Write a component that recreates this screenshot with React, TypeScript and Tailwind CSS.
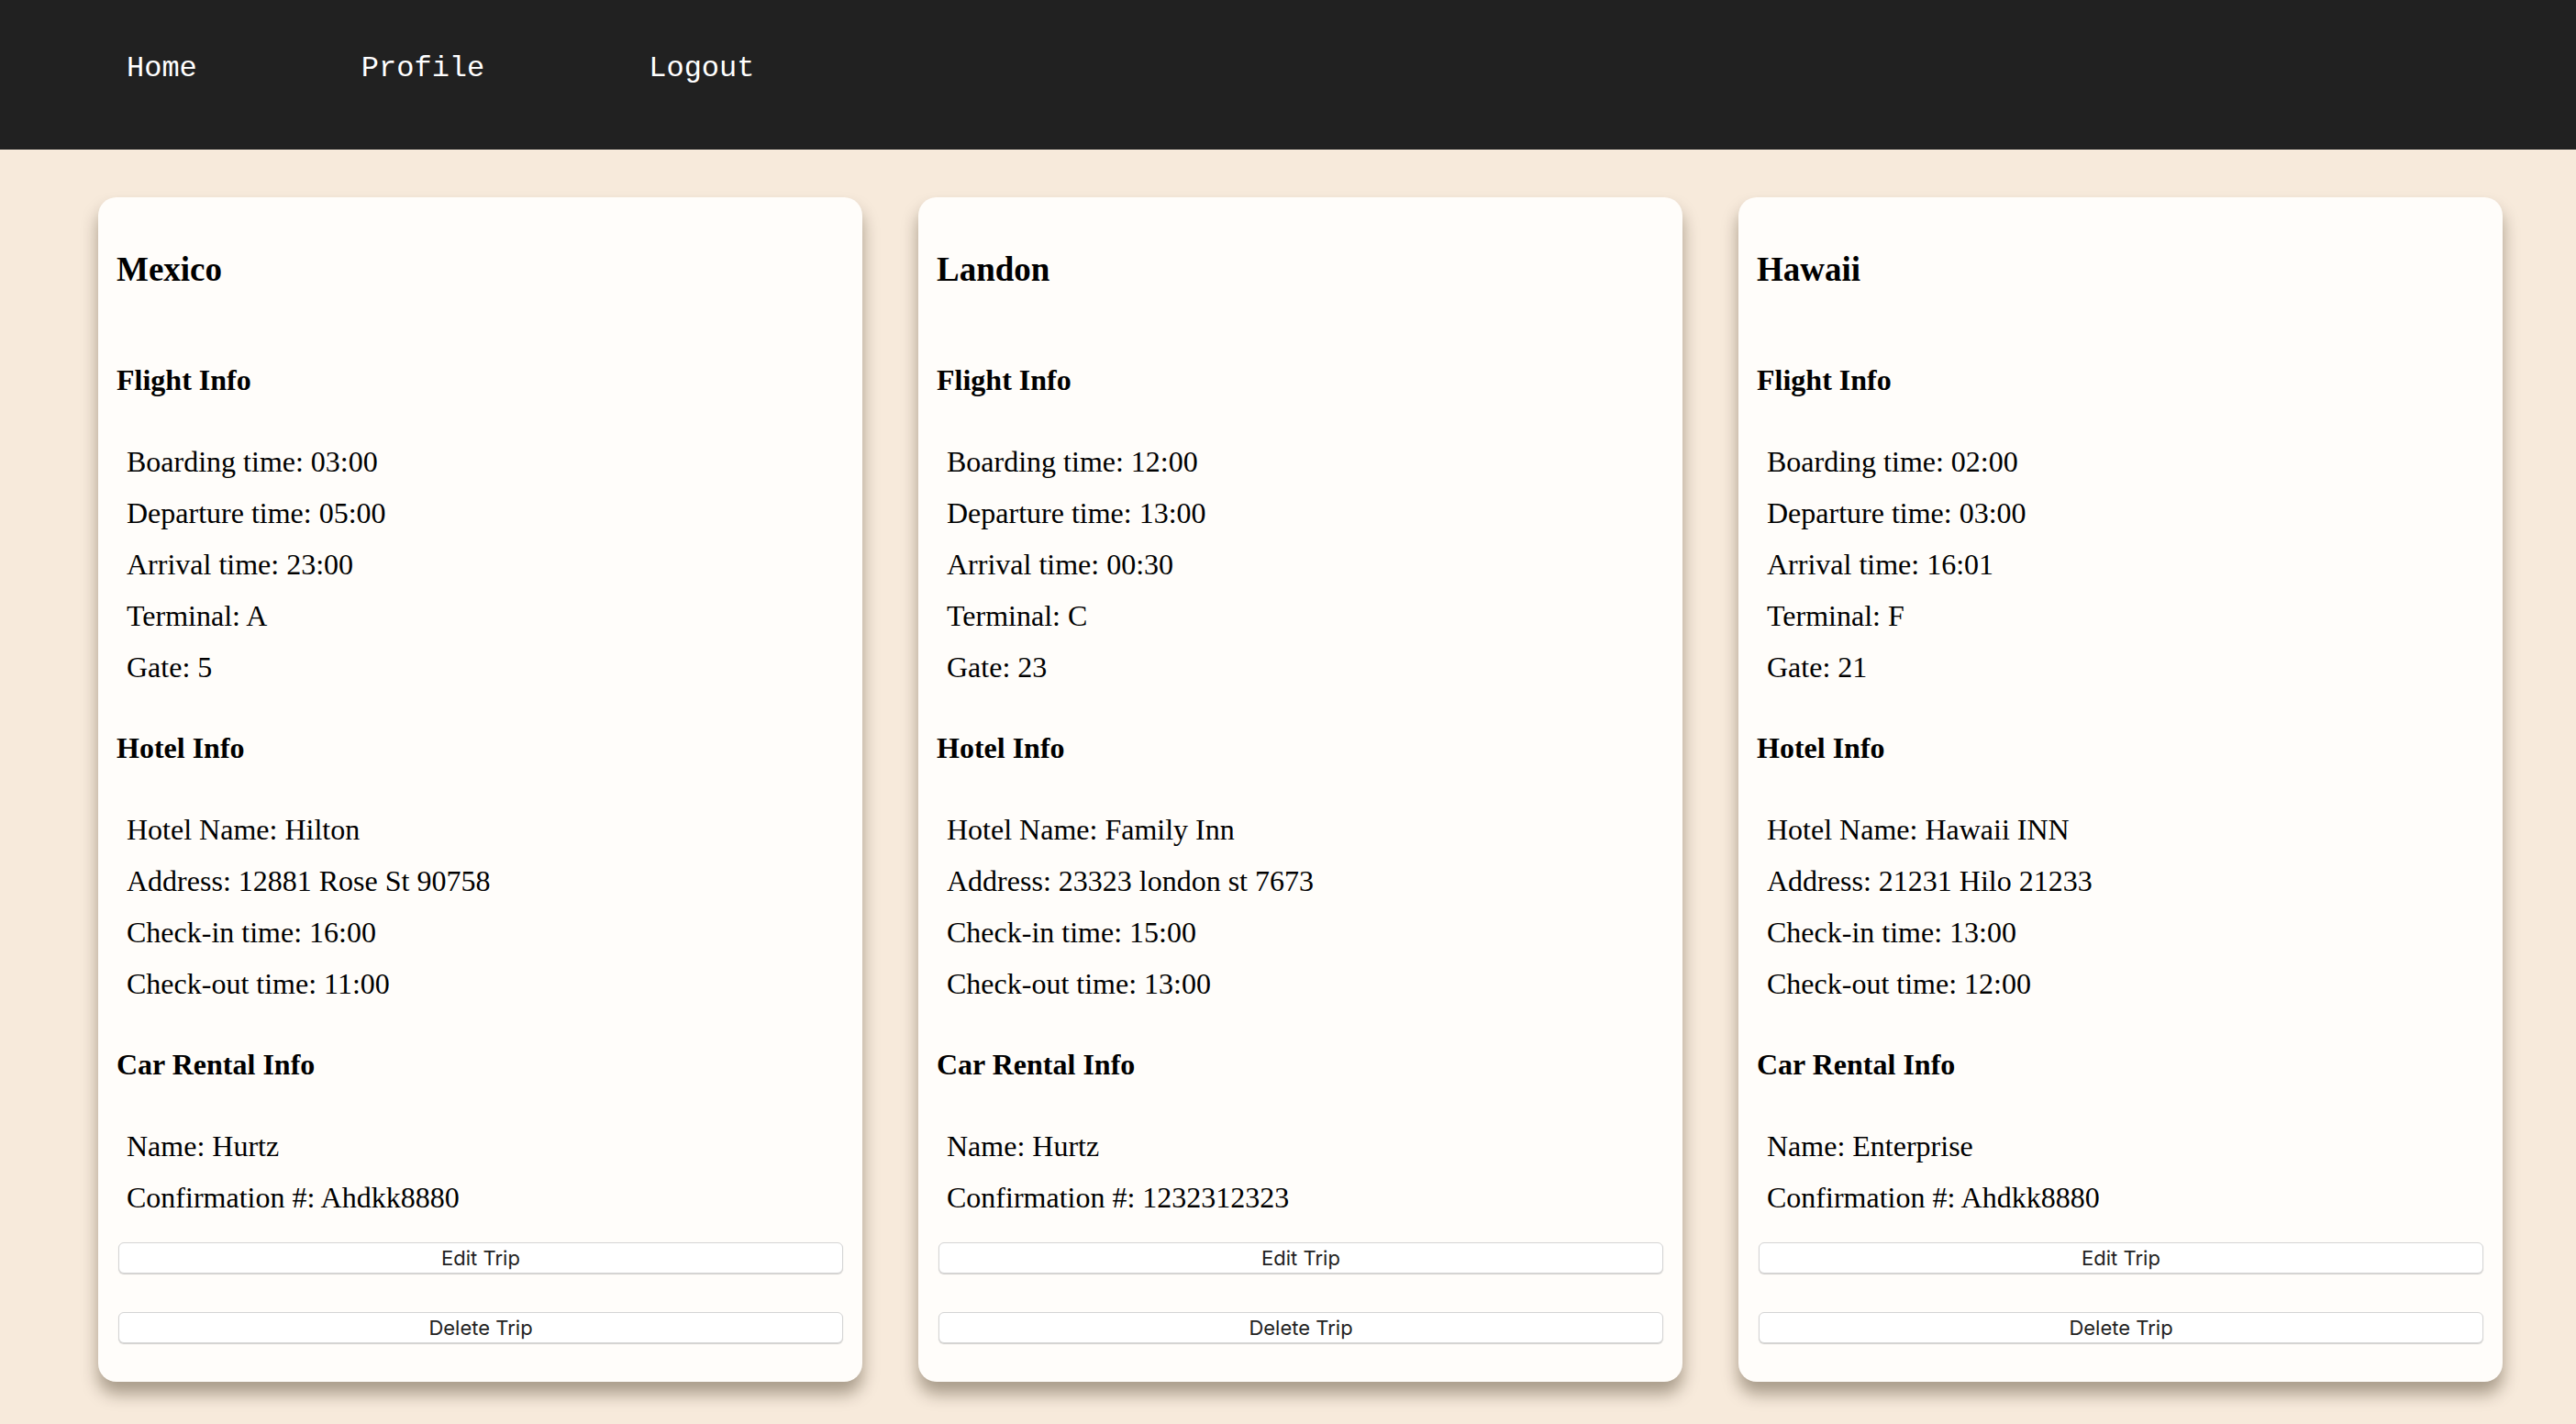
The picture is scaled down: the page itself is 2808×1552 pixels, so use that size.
import React from 'react';

type Trip = {
  id: number;
  city: string;
  flight: string[];
  hotel: string[];
  car: string[];
};

const trips: Trip[] = [
  {
    id: 1,
    city: 'Mexico',
    flight: ['Boarding time: 03:00', 'Departure time: 05:00', 'Arrival time: 23:00', 'Terminal: A', 'Gate: 5'],
    hotel: ['Hotel Name: Hilton', 'Address: 12881 Rose St 90758', 'Check-in time: 16:00', 'Check-out time: 11:00'],
    car: ['Name: Hurtz', 'Confirmation #: Ahdkk8880'],
  },
  {
    id: 2,
    city: 'Landon',
    flight: ['Boarding time: 12:00', 'Departure time: 13:00', 'Arrival time: 00:30', 'Terminal: C', 'Gate: 23'],
    hotel: ['Hotel Name: Family Inn', 'Address: 23323 london st 7673', 'Check-in time: 15:00', 'Check-out time: 13:00'],
    car: ['Name: Hurtz', 'Confirmation #: 1232312323'],
  },
  {
    id: 3,
    city: 'Hawaii',
    flight: ['Boarding time: 02:00', 'Departure time: 03:00', 'Arrival time: 16:01', 'Terminal: F', 'Gate: 21'],
    hotel: ['Hotel Name: Hawaii INN', 'Address: 21231 Hilo 21233', 'Check-in time: 13:00', 'Check-out time: 12:00'],
    car: ['Name: Enterprise', 'Confirmation #: Ahdkk8880'],
  },
];

const Section = ({ title, items, first }: { title: string; items: string[]; first?: boolean }) => (
  <div className={first ? 'mt-[79px]' : 'mt-[41px]'}>
    <h4 className="text-[32px] font-bold leading-[38px]">{title}</h4>
    <div className="mt-[42px] pl-[11px]">
      {items.map((item) => (
        <p key={item} className="text-[32px] leading-[56px]">
          {item}
        </p>
      ))}
    </div>
  </div>
);

const TripCard = ({ trip }: { trip: Trip }) => (
  <div className="w-[833px] shrink-0 rounded-[20px] bg-[#fffdfa] pl-[20px] pr-[21px] pt-[57px] pb-[42px] text-black shadow-[0_13px_18px_rgba(40,25,5,0.38)]">
    <h3 className="text-[37px] font-bold leading-[44px]">{trip.city}</h3>
    <Section title="Flight Info" items={trip.flight} first />
    <Section title="Hotel Info" items={trip.hotel} />
    <Section title="Car Rental Info" items={trip.car} />

    <div className="mt-[21px] flex flex-col gap-[42px] pl-[2px]">
      <button className="h-[34px] w-full rounded-[6px] border border-[#d4d4d4] bg-white font-['Inter',sans-serif] text-[22px] text-[#222] shadow-[0_1px_1px_rgba(0,0,0,0.18)]">
        Edit Trip
      </button>
      <button className="h-[34px] w-full rounded-[6px] border border-[#d4d4d4] bg-white font-['Inter',sans-serif] text-[22px] text-[#222] shadow-[0_1px_1px_rgba(0,0,0,0.18)]">
        Delete Trip
      </button>
    </div>
  </div>
);

export default function App() {
  return (
    <div className="min-h-screen bg-[#f7eadb] font-['Liberation_Serif',serif]">
      {/* Nav */}
      <nav className="flex h-[163px] items-center gap-[179px] bg-[#212121] pl-[138px] pb-[13px] font-['Liberation_Mono',monospace] text-[32px] text-white">
        <span>Home</span>
        <span>Profile</span>
        <span>Logout</span>
      </nav>

      {/* Trips */}
      <main className="flex gap-[61px] pl-[107px] pt-[52px] pb-[48px]">
        {trips.map((trip) => (
          <TripCard key={trip.id} trip={trip} />
        ))}
      </main>
    </div>
  );
}
